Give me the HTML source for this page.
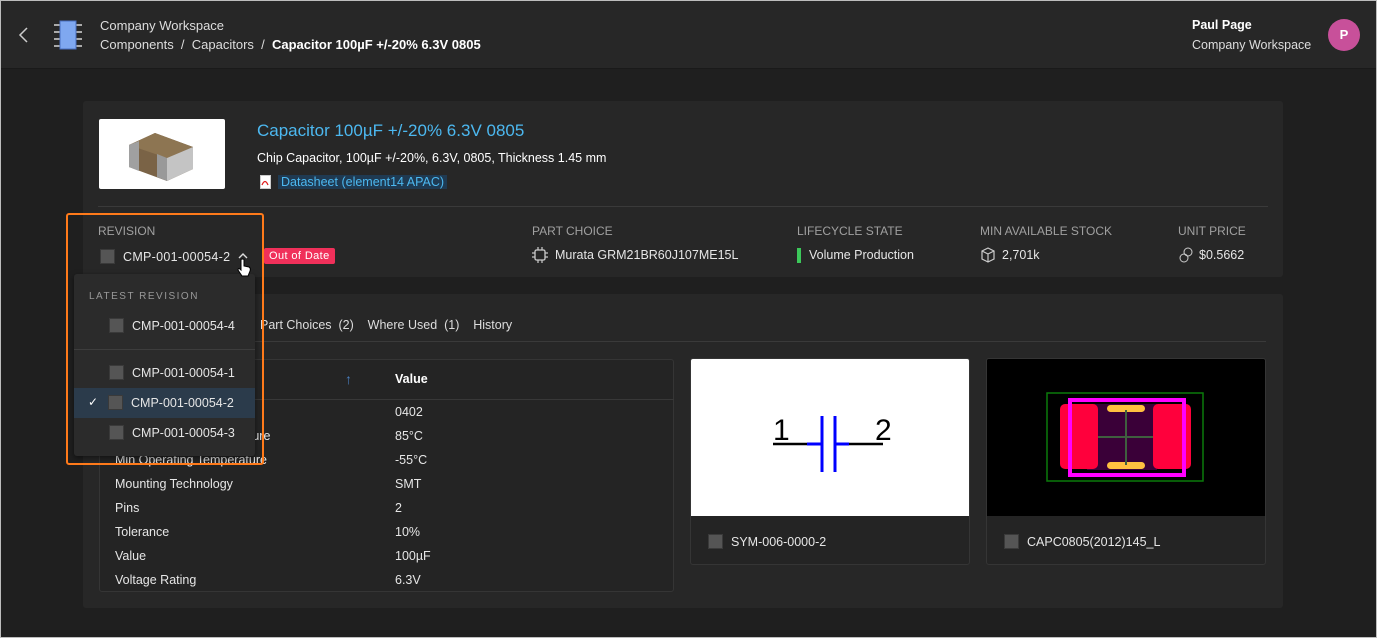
<!DOCTYPE html>
<html><head><meta charset="utf-8"><style>
*{box-sizing:border-box;margin:0;padding:0}
body{width:1377px;height:638px;overflow:hidden;background:#1f1f1f;font-family:"Liberation Sans",Arial,sans-serif;color:#e6e6e6;font-size:13px;position:relative}
.frame{position:absolute;inset:0;border:1px solid #bdbdbd;pointer-events:none;z-index:50}
.abs{position:absolute;white-space:nowrap}
.hdr{position:absolute;left:0;top:0;width:1377px;height:69px;background:#272727;border-bottom:1px solid #1a1a1a}
.card{position:absolute;background:#272727;border-radius:3px}
.lbl{color:#a0a0a0;font-size:12px}
.cb{display:inline-block;width:15px;height:15px;background:#555;border:1px solid #3a3a3a;vertical-align:middle}
.row{position:absolute;left:115px;font-size:12.5px}
.val{position:absolute;left:395px;font-size:12.5px}
</style></head><body>
<div class="frame"></div>
<div class="hdr">
 <svg class="abs" style="left:18px;top:27px" width="12" height="16"><path d="M9 1 L2 8 L9 15" stroke="#ccc" stroke-width="1.5" fill="none"/></svg>
 <svg class="abs" style="left:53px;top:19px" width="30" height="32"><g stroke="#aaa" stroke-width="2"><line x1="1" y1="6" x2="29" y2="6"/><line x1="1" y1="13" x2="29" y2="13"/><line x1="1" y1="20" x2="29" y2="20"/><line x1="1" y1="27" x2="29" y2="27"/></g><rect x="7" y="2" width="16" height="28" fill="#7fa8f0" stroke="#4a6fc0"/></svg>
 <div class="abs" style="left:100px;top:18px;font-size:13px;color:#ddd">Company Workspace</div>
 <div class="abs" style="left:100px;top:37px;font-size:13px;color:#ddd">Components &nbsp;/&nbsp; Capacitors &nbsp;/&nbsp; <b style="color:#fff">Capacitor 100µF +/-20% 6.3V 0805</b></div>
 <div class="abs" style="left:1192px;top:18px;font-size:12.5px;font-weight:bold;color:#fff">Paul Page</div>
 <div class="abs" style="left:1192px;top:38px;font-size:12.5px;color:#ddd">Company Workspace</div>
 <div class="abs" style="left:1328px;top:19px;width:32px;height:32px;border-radius:50%;background:#c8509a;color:#fff;font-weight:bold;text-align:center;line-height:32px;font-size:13px">P</div>
</div>

<div class="card" style="left:83px;top:101px;width:1200px;height:176px"></div>
<div class="abs" style="left:99px;top:119px;width:126px;height:70px;background:#fff;border-radius:2px">
 <svg width="126" height="70"><polygon points="30,26 56,14 94,28 94,50 68,62 30,48" fill="#7a6346"/><polygon points="30,26 56,14 94,28 68,39" fill="#8d7552"/><polygon points="30,26 40,22 40,52 30,48" fill="#a0a0a0"/><polygon points="68,39 94,28 94,50 68,62" fill="#c4c4c4"/><polygon points="58,35 68,39 68,62 58,58" fill="#999"/></svg>
</div>
<div class="abs" style="left:257px;top:121px;font-size:17px;color:#4cb8f0">Capacitor 100µF +/-20% 6.3V 0805</div>
<div class="abs" style="left:257px;top:151px;font-size:12.5px;color:#fff">Chip Capacitor, 100µF +/-20%, 6.3V, 0805, Thickness 1.45 mm</div>
<svg class="abs" style="left:260px;top:175px" width="11" height="14"><rect x="0.5" y="0.5" width="10" height="13" fill="#fff" stroke="#ccc"/><path d="M2 10 Q5 3 8 10" stroke="#e02020" fill="none" stroke-width="1.3"/></svg>
<div class="abs" style="left:278px;top:175px;font-size:12.5px;color:#4cb8f0;background:#1f3a52;padding:0 3px">Datasheet (element14 APAC)</div>
<div class="abs" style="left:98px;top:206px;width:1170px;height:1px;background:#3a3a3a"></div>

<div class="abs lbl" style="left:98px;top:224px">REVISION</div>
<div class="abs" style="left:100px;top:248px"><span class="cb"></span><span style="margin-left:8px;font-size:12.5px;vertical-align:middle;letter-spacing:0.3px">CMP-001-00054-2</span></div>
<svg class="abs" style="left:238px;top:252px" width="10" height="7"><path d="M1 6 L5 2 L9 6" stroke="#ddd" stroke-width="1.4" fill="none"/></svg>
<div class="abs" style="left:264px;top:248px;background:#f0305a;color:#fff;font-size:11px;padding:2px 5px;border-radius:2px;letter-spacing:0.4px">Out of Date</div>
<div class="abs lbl" style="left:532px;top:224px">PART CHOICE</div>
<svg class="abs" style="left:532px;top:247px" width="16" height="16"><rect x="3" y="3" width="10" height="10" rx="1.5" stroke="#ccc" fill="none" stroke-width="1.3"/><g stroke="#ccc" stroke-width="1.2"><line x1="0" y1="6" x2="3" y2="6"/><line x1="0" y1="10" x2="3" y2="10"/><line x1="13" y1="6" x2="16" y2="6"/><line x1="13" y1="10" x2="16" y2="10"/><line x1="6" y1="0" x2="6" y2="3"/><line x1="10" y1="0" x2="10" y2="3"/><line x1="6" y1="13" x2="6" y2="16"/><line x1="10" y1="13" x2="10" y2="16"/></g></svg>
<div class="abs" style="left:555px;top:248px;font-size:12.5px">Murata GRM21BR60J107ME15L</div>
<div class="abs lbl" style="left:797px;top:224px">LIFECYCLE STATE</div>
<div class="abs" style="left:797px;top:248px;width:4px;height:15px;background:#3cc85a"></div>
<div class="abs" style="left:809px;top:248px;font-size:12.5px">Volume Production</div>
<div class="abs lbl" style="left:980px;top:224px">MIN AVAILABLE STOCK</div>
<svg class="abs" style="left:981px;top:247px" width="14" height="16"><path d="M7 1 L13 4 L13 12 L7 15 L1 12 L1 4 Z M1 4 L7 7 L13 4 M7 7 L7 15" stroke="#ccc" fill="none" stroke-width="1.2"/></svg>
<div class="abs" style="left:1002px;top:248px;font-size:12.5px">2,701k</div>
<div class="abs lbl" style="left:1178px;top:224px">UNIT PRICE</div>
<svg class="abs" style="left:1179px;top:247px" width="14" height="16"><circle cx="9" cy="5" r="4" stroke="#ccc" fill="none"/><circle cx="5" cy="11" r="4" stroke="#ccc" fill="none"/></svg>
<div class="abs" style="left:1199px;top:248px;font-size:12.5px">$0.5662</div>

<div class="card" style="left:83px;top:294px;width:1200px;height:314px"></div>
<div class="abs" style="left:99px;top:318px;font-size:12.5px;color:#ddd">Properties</div>
<div class="abs" style="left:260px;top:318px;font-size:12.5px;color:#ddd">Part Choices &nbsp;(2) &nbsp;&nbsp;&nbsp;Where Used &nbsp;(1) &nbsp;&nbsp;&nbsp;History</div>
<div class="abs" style="left:98px;top:341px;width:1168px;height:1px;background:#3a3a3a"></div>

<div class="abs" style="left:99px;top:359px;width:575px;height:233px;background:#242424;border:1px solid #353535;border-radius:3px"></div>
<div class="abs" style="left:99px;top:399px;width:575px;height:1px;background:#383838"></div>
<div class="abs" style="left:345px;top:371px;color:#4a7fc0;font-size:14px">↑</div>
<div class="abs" style="left:395px;top:372px;font-weight:bold;font-size:12.5px;color:#fff">Value</div>
<div class="row" style="top:405px">Case/Package</div><div class="val" style="top:405px">0402</div>
<div class="row" style="top:429px">Max Operating Temperature</div><div class="val" style="top:429px">85°C</div>
<div class="row" style="top:453px">Min Operating Temperature</div><div class="val" style="top:453px">-55°C</div>
<div class="row" style="top:477px">Mounting Technology</div><div class="val" style="top:477px">SMT</div>
<div class="row" style="top:501px">Pins</div><div class="val" style="top:501px">2</div>
<div class="row" style="top:525px">Tolerance</div><div class="val" style="top:525px">10%</div>
<div class="row" style="top:549px">Value</div><div class="val" style="top:549px">100µF</div>
<div class="row" style="top:573px">Voltage Rating</div><div class="val" style="top:573px">6.3V</div>

<div class="abs" style="left:690px;top:358px;width:280px;height:207px;background:#242424;border:1px solid #353535;border-radius:3px;overflow:hidden">
 <svg width="280" height="157" style="display:block;background:#fff"><g stroke="#000" stroke-width="2.5"><line x1="82" y1="85" x2="125" y2="85"/><line x1="146" y1="85" x2="192" y2="85"/></g><g stroke="#0000ff" stroke-width="3"><line x1="116" y1="85" x2="131" y2="85"/><line x1="144" y1="85" x2="158" y2="85"/><line x1="131" y1="57" x2="131" y2="113"/><line x1="144" y1="57" x2="144" y2="113"/></g><text x="82" y="81" font-size="30" font-family="Liberation Sans">1</text><text x="184" y="81" font-size="30" font-family="Liberation Sans">2</text></svg>
 <div style="position:absolute;left:17px;top:174px"><span class="cb"></span><span style="margin-left:8px;font-size:12.5px;vertical-align:middle">SYM-006-0000-2</span></div>
</div>
<div class="abs" style="left:986px;top:358px;width:280px;height:207px;background:#242424;border:1px solid #353535;border-radius:3px;overflow:hidden">
 <svg width="280" height="157" style="display:block;background:#000"><rect x="60" y="34" width="156" height="88" fill="none" stroke="#0a7a0a" stroke-width="1.5"/><rect x="100" y="45" width="70" height="66" fill="#3a0038"/><rect x="73" y="45" width="38" height="65" rx="5" fill="#ff003c"/><rect x="166" y="45" width="38" height="65" rx="5" fill="#ff003c"/><rect x="83" y="41" width="114" height="75" fill="none" stroke="#ff00ff" stroke-width="4"/><rect x="120" y="46" width="38" height="7" rx="3.5" fill="#ffc040"/><rect x="120" y="103" width="38" height="7" rx="3.5" fill="#ffc040"/><g stroke="#3f5f3f" stroke-width="2"><line x1="139" y1="51" x2="139" y2="106"/><line x1="111" y1="78" x2="166" y2="78"/></g></svg>
 <div style="position:absolute;left:17px;top:174px"><span class="cb"></span><span style="margin-left:8px;font-size:12.5px;vertical-align:middle">CAPC0805(2012)145_L</span></div>
</div>

<div class="abs" style="left:74px;top:274px;width:181px;height:182px;background:#2b2b2b;border-radius:3px;box-shadow:0 2px 6px rgba(0,0,0,.5)">
 <div class="abs" style="left:15px;top:17px;font-size:10px;letter-spacing:1.5px;color:#999">LATEST REVISION</div>
 <div class="abs" style="left:35px;top:43px"><span class="cb"></span><span style="margin-left:8px;font-size:12.5px;vertical-align:middle">CMP-001-00054-4</span></div>
 <div class="abs" style="left:0;top:75px;width:181px;height:1px;background:#3d3d3d"></div>
 <div class="abs" style="left:35px;top:90px"><span class="cb"></span><span style="margin-left:8px;font-size:12.5px;vertical-align:middle">CMP-001-00054-1</span></div>
 <div class="abs" style="left:0;top:114px;width:181px;height:30px;background:#2b3b4b"></div>
 <div class="abs" style="left:14px;top:121px;font-size:12px;color:#fff">✓</div>
 <div class="abs" style="left:34px;top:120px"><span class="cb"></span><span style="margin-left:8px;font-size:12.5px;vertical-align:middle">CMP-001-00054-2</span></div>
 <div class="abs" style="left:35px;top:150px"><span class="cb"></span><span style="margin-left:8px;font-size:12.5px;vertical-align:middle">CMP-001-00054-3</span></div>
</div>
<div class="abs" style="left:66px;top:213px;width:198px;height:252px;border:2px solid #ff7a1a;border-radius:3px"></div>
<svg class="abs" style="left:236px;top:258px" width="16" height="20"><path d="M5 1.5 Q6.5 0.5 8 1.5 L8 8 L13 9 Q15 10 14 13 L12 18 L6 18 L2 12 Q2 10 4 11 L5 12 Z" fill="#fff" stroke="#000" stroke-width="1"/></svg>
</body></html>
